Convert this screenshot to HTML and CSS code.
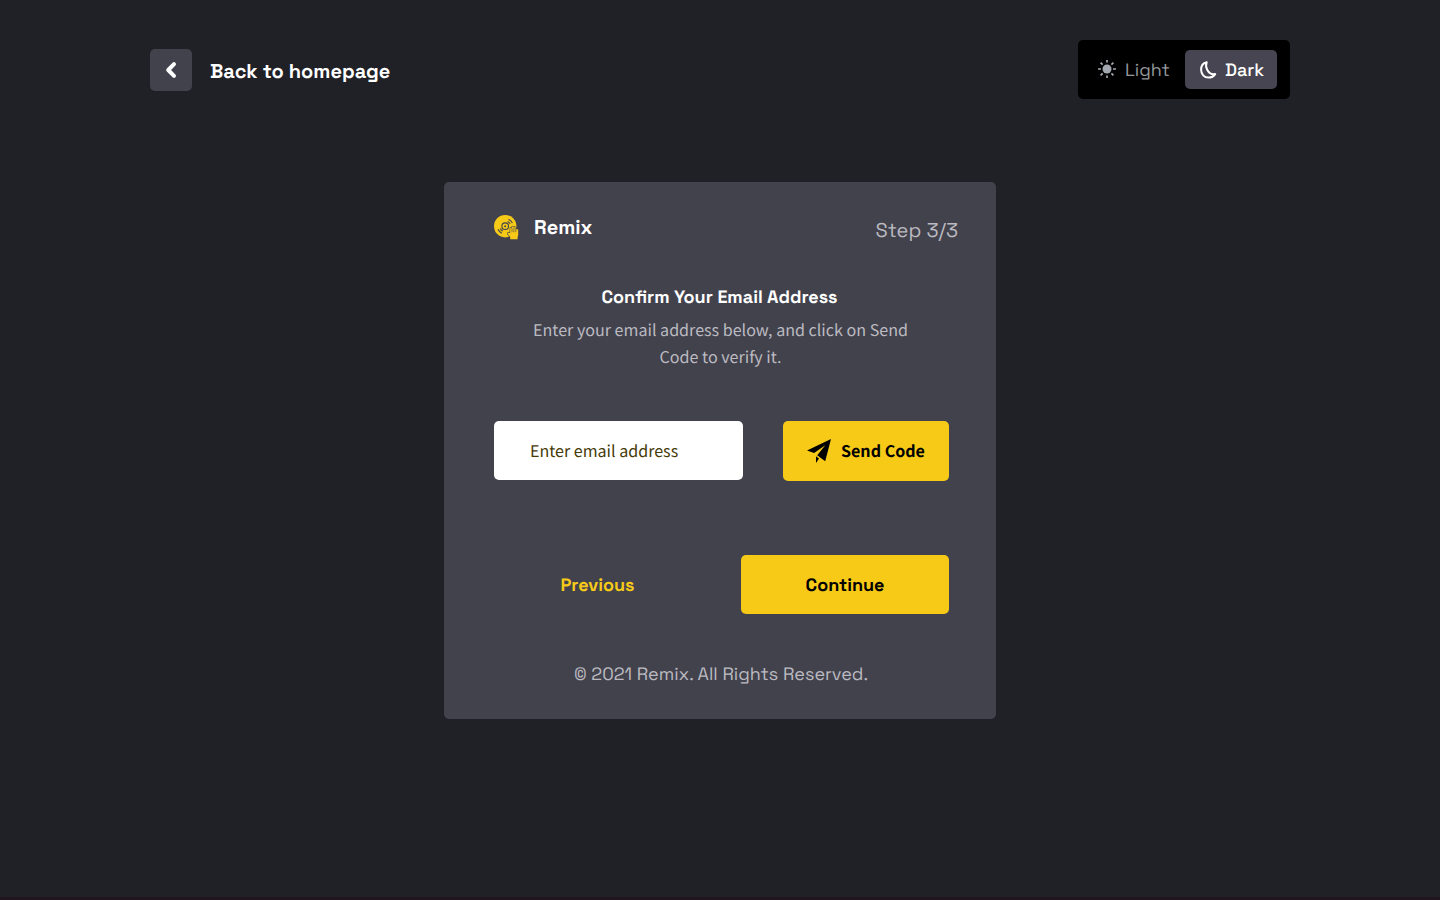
FILE: index.html
```html
<!DOCTYPE html>
<html lang="en">
<head>
<meta charset="utf-8">
<title>Remix – Confirm your email</title>
<link rel="stylesheet" href="styles.css">
</head>
<body>
<div class="page">
  <header class="topbar">
    <a class="back">
      <span class="back-icon"><svg width="42" height="42" viewBox="0 0 42 42"><path d="M24 15.2L18.2 21L24 26.8" fill="none" stroke="#fff" stroke-width="4" stroke-linecap="round" stroke-linejoin="round"/></svg></span>
      <span class="back-label">Back to homepage</span>
    </a>
    <div class="theme">
      <span class="light">
        <svg class="sun" width="18" height="18" viewBox="0 0 18 18"><circle cx="9" cy="9" r="4.5" fill="#a3a7b0"/><path d="M9 0v2.6M9 15.4V18M0 9h3M15 9h3M2.6 2.6l2 2M13.4 13.4l2 2M2.6 15.4l2-2M13.4 4.6l2-2" stroke="#a3a7b0" stroke-width="1.7"/></svg>
        <span class="theme-label">Light</span>
      </span>
      <span class="dark">
        <svg width="18" height="18" viewBox="0 0 18 18"><path d="M7.7 1.2C4.2 2 2.1 5 2.1 8.7C2.1 13.2 5.2 16.6 9.4 16.6C12.4 16.6 14.8 15.2 16.2 13.1C12.8 13.8 10 12.2 8.3 9.1C6.9 6.5 6.7 3.6 7.7 1.2Z" fill="none" stroke="#fff" stroke-width="2" stroke-linejoin="round"/></svg>
        <span class="theme-label">Dark</span>
      </span>
    </div>
  </header>
  <main class="card">
    <div class="card-head">
      <div class="brand">
        <svg width="25" height="25" viewBox="0 0 25 25">
          <circle cx="11.2" cy="11.2" r="11.2" fill="#f7ca18"/>
          <g fill="none" stroke="#42424d" stroke-width="1.1">
            <circle cx="11.2" cy="11.2" r="3.3"/>
            <path d="M13.6 6.4Q15.4 7.2 16.1 8.9M14.5 4.2Q17.3 5.4 18.4 8.1M8.8 16Q7 15.2 6.3 13.5M7.9 18.2Q5.1 17 4 14.3"/>
          </g>
          <circle cx="11.2" cy="11.2" r="1" fill="#42424d"/>
          <path d="M16.2 24.3V21.9L13.7 19Q13.2 17.4 14.7 17.5L16.2 18.6V13.2Q17.1 12 18 13.2V11.9Q19 10.7 19.9 11.9V12.5Q20.9 11.4 21.8 12.6V14.4Q23 13.5 24.2 14.8V20.6L23.6 22V24.3Z" fill="#f7ca18" stroke="#42424d" stroke-width="1.2" paint-order="stroke"/>
          <path d="M18 13V17.2M19.9 12.5V17.2M21.8 13.5V17.2" stroke="#42424d" stroke-width=".6"/>
        </svg>
        <span class="brand-name">Remix</span>
      </div>
      <span class="step">Step 3/3</span>
    </div>
    <h1 class="title"><span>Confirm Your Email Address</span></h1>
    <p class="desc">Enter your email address below, and click on Send<br>Code to verify it.</p>
    <div class="form-row">
      <div class="field">Enter email address</div>
      <div class="send">
        <svg width="24" height="25" viewBox="0 0 24 25"><path d="M24 0L0 11.6L7.1 14L18.3 6.2L10.2 16.2L18.2 22.2ZM9 17.2V24L12 19.6Z" fill="#000"/></svg>
        <span class="send-label">Send Code</span>
      </div>
    </div>
    <div class="nav-row">
      <a class="previous"><span>Previous</span></a>
      <a class="continue"><span>Continue</span></a>
    </div>
    <footer class="copyright">© 2021 Remix. All Rights Reserved.</footer>
  </main>
</div>
</body>
</html>
```
FILE: styles.css
```css
* { box-sizing: border-box; }
body { margin: 0; background: #202126; color: #fff; font-family: "Space Grotesk", Inter, sans-serif; white-space: nowrap; text-rendering: geometricPrecision; }
.page { height: 900px; padding-top: 40px; border-bottom: 3px solid #21161f; display: flex; flex-direction: column; align-items: center; }
svg { display: block; flex: none; }
.topbar { width: 1140px; height: 59px; display: flex; justify-content: space-between; align-items: center; }
.back { display: flex; align-items: center; gap: 18px; }
.back-icon { width: 42px; height: 42px; border-radius: 5px; background: #42424d; }
.back-label { font-size: 20px; line-height: 26px; font-weight: 600; padding-top: 2px; }
.theme { width: 212px; height: 59px; padding: 10px 13px 10px 20px; border-radius: 5px; background: #000; display: flex; justify-content: space-between; font-size: 18px; }
.theme-label { padding-top: 2px; }
.light { display: flex; align-items: center; gap: 9px; color: #95979b; }
.sun { margin-bottom: 2px; }
.dark { width: 92px; height: 39px; padding-left: 14px; border-radius: 5px; background: #474551; display: flex; align-items: center; gap: 8px; font-weight: 500; }
.card { width: 552px; height: 537px; margin-top: 83px; border-radius: 5px; background: #42424d; display: flex; flex-direction: column; }
.card-head { height: 72px; padding: 33px 38px 0 50px; display: flex; justify-content: space-between; }
.brand { height: 25px; display: flex; align-items: center; gap: 15px; }
.brand-name { font-size: 20px; line-height: 26px; padding-bottom: 2px; font-weight: 600; }
.step { font-size: 20px; line-height: 30px; color: #bbbac0; }
.title { margin: 30px 0 0; padding-right: 1px; font-size: 18px; line-height: 28px; font-weight: 600; text-align: center; }
.desc { margin: 4px 0 0; padding-left: 1px; text-align: center; font-family: "Source Sans Pro", "Noto Sans CJK SC", sans-serif; font-size: 16.1px; line-height: 27px; color: #bbbac0; }
.form-row { margin: 51px 47px 0 50px; display: flex; justify-content: space-between; font-family: "Source Sans Pro", "Noto Sans CJK SC", sans-serif; font-size: 16.07px; }
.field { width: 249px; height: 59px; padding-left: 36px; border-radius: 5px; background: #fff; color: #463a08; line-height: 58px; }
.send { width: 166px; height: 60px; padding-left: 24px; border-radius: 5px; background: #f7ca18; color: #000; display: flex; align-items: center; gap: 10px; font-weight: 700; }
.send-label { padding-bottom: 2px; }
.nav-row { margin: 74px 47px 0 50px; height: 59px; display: flex; justify-content: space-between; font-size: 18px; line-height: 62px; font-weight: 600; text-align: center; }
.previous { width: 207px; color: #f7ca18; }
.continue { width: 208px; height: 59px; border-radius: 5px; background: #f7ca18; color: #000; }
.copyright { margin-top: 47px; padding-left: 2px; text-align: center; font-size: 18px; line-height: 28px; color: #bbbac0; }
```
